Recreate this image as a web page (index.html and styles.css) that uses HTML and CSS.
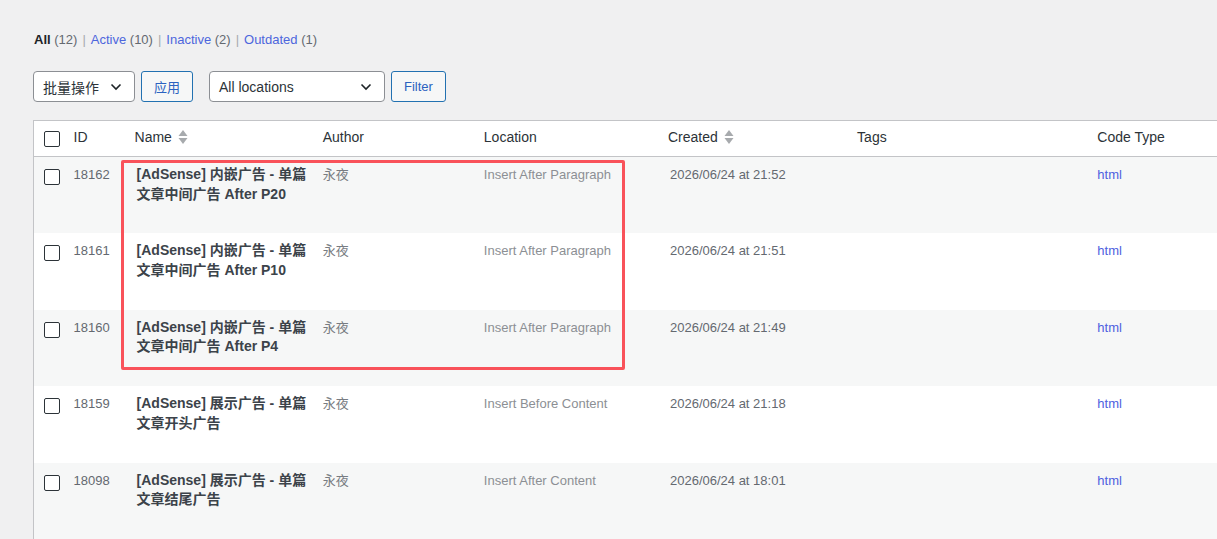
FILE: index.html
```html
<!DOCTYPE html>
<html lang="zh-CN">
<head>
  <meta charset="UTF-8" />
  <meta name="viewport" content="width=device-width, initial-scale=1.0"/>
  <title>Code Snippets</title>
  <link rel="stylesheet" href="styles.css">
</head>
<body>

  <ul class="subsubsub">
    <li><a class="current">All</a> <span class="count">(12)</span></li>
    <li class="sep">|</li>
    <li><a>Active</a> <span class="count">(10)</span></li>
    <li class="sep">|</li>
    <li><a>Inactive</a> <span class="count">(2)</span></li>
    <li class="sep">|</li>
    <li><a>Outdated</a> <span class="count">(1)</span></li>
  </ul>

  <div class="tablenav">
    <div class="select bulk">
      <span>批量操作</span>
      <svg class="chev" width="12" height="8" viewBox="0 0 12 8"><polyline points="1.5,1.5 6,6 10.5,1.5" fill="none" stroke="#1d2327" stroke-width="1.6"/></svg>
    </div>
    <button class="button">应用</button>
    <div class="select locations">
      <span>All locations</span>
      <svg class="chev" width="12" height="8" viewBox="0 0 12 8"><polyline points="1.5,1.5 6,6 10.5,1.5" fill="none" stroke="#1d2327" stroke-width="1.6"/></svg>
    </div>
    <button class="button">Filter</button>
  </div>

  <div class="table-wrap">
    <table class="snippets">
      <colgroup>
        <col style="width:30px"><col style="width:61px"><col style="width:188px"><col style="width:161px">
        <col style="width:184px"><col style="width:189px"><col style="width:240px"><col style="width:200px">
      </colgroup>
      <thead>
        <tr>
          <th class="check"><span class="box"></span></th>
          <th>ID</th>
          <th>Name <svg class="sort" width="10" height="16" viewBox="0 0 10 16"><polygon points="5,1 9.5,7 0.5,7" fill="#a7aaad"/><polygon points="0.5,9 9.5,9 5,15" fill="#a7aaad"/></svg></th>
          <th>Author</th>
          <th>Location</th>
          <th>Created <svg class="sort" width="10" height="16" viewBox="0 0 10 16"><polygon points="5,1 9.5,7 0.5,7" fill="#a7aaad"/><polygon points="0.5,9 9.5,9 5,15" fill="#a7aaad"/></svg></th>
          <th>Tags</th>
          <th>Code Type</th>
        </tr>
      </thead>
      <tbody>
        <tr>
          <td class="check"><span class="box"></span></td>
          <td class="id">18162</td>
          <td class="name">[AdSense] 内嵌广告 - 单篇文章中间广告 After P20</td>
          <td class="author">永夜</td>
          <td class="location">Insert After Paragraph</td>
          <td class="date">2026/06/24 at 21:52</td>
          <td></td>
          <td><a class="type">html</a></td>
        </tr>
        <tr>
          <td class="check"><span class="box"></span></td>
          <td class="id">18161</td>
          <td class="name">[AdSense] 内嵌广告 - 单篇文章中间广告 After P10</td>
          <td class="author">永夜</td>
          <td class="location">Insert After Paragraph</td>
          <td class="date">2026/06/24 at 21:51</td>
          <td></td>
          <td><a class="type">html</a></td>
        </tr>
        <tr>
          <td class="check"><span class="box"></span></td>
          <td class="id">18160</td>
          <td class="name">[AdSense] 内嵌广告 - 单篇文章中间广告 After P4</td>
          <td class="author">永夜</td>
          <td class="location">Insert After Paragraph</td>
          <td class="date">2026/06/24 at 21:49</td>
          <td></td>
          <td><a class="type">html</a></td>
        </tr>
        <tr>
          <td class="check"><span class="box"></span></td>
          <td class="id">18159</td>
          <td class="name">[AdSense] 展示广告 - 单篇文章开头广告</td>
          <td class="author">永夜</td>
          <td class="location">Insert Before Content</td>
          <td class="date">2026/06/24 at 21:18</td>
          <td></td>
          <td><a class="type">html</a></td>
        </tr>
        <tr>
          <td class="check"><span class="box"></span></td>
          <td class="id">18098</td>
          <td class="name">[AdSense] 展示广告 - 单篇文章结尾广告</td>
          <td class="author">永夜</td>
          <td class="location">Insert After Content</td>
          <td class="date">2026/06/24 at 18:01</td>
          <td></td>
          <td><a class="type">html</a></td>
        </tr>
      </tbody>
    </table>
    <div class="highlight"></div>
  </div>

</body>
</html>
```

FILE: styles.css
```css
body {
  margin: 0;
  padding: 30px 0 0 33px;
  background-color: #f0f0f1;
  font-family: "Liberation Sans", "Noto Sans CJK SC", sans-serif;
  font-size: 13px;
  color: #3c434a;
  overflow: hidden;
}
.subsubsub {
  list-style: none;
  margin: 0;
  padding: 0 0 0 1px;
  display: flex;
  gap: 5px;
  line-height: 20px;
  color: #646970;
}
.subsubsub a {
  color: #4d66dd;
}
.subsubsub a.current {
  color: #1d2327;
  font-weight: bold;
}
.subsubsub .sep {
  color: #a7aaad;
}
.tablenav {
  display: flex;
  align-items: center;
  margin-top: 21px;
  height: 31px;
}
.select {
  box-sizing: border-box;
  height: 31px;
  display: flex;
  align-items: center;
  justify-content: space-between;
  padding: 0 12px 0 9px;
  background: #fff;
  border: 1px solid #8c8f94;
  border-radius: 4px;
  font-size: 14px;
  color: #2c3338;
}
.bulk {
  width: 102px;
}
.locations {
  width: 176px;
  margin-left: 16px;
}
.button {
  box-sizing: border-box;
  height: 31px;
  margin-left: 6px;
  padding: 0 12px;
  background: #f6f7f7;
  border: 1px solid #2271b1;
  border-radius: 3px;
  color: #2b62c0;
  font-family: inherit;
  font-size: 13px;
}
.table-wrap {
  position: relative;
  margin-top: 18px;
}
.snippets {
  table-layout: fixed;
  width: 1255px;
  border-collapse: collapse;
  border: 1px solid #c3c4c7;
}
.snippets th {
  height: 32px;
  padding: 0 10px 3px;
  text-align: left;
  font-weight: normal;
  font-size: 14px;
  color: #2c3338;
  background: #fff;
  border-bottom: 1px solid #c3c4c7;
}
.snippets td {
  height: 76.5px;
  box-sizing: border-box;
  padding: 8px 10px;
  vertical-align: top;
  line-height: 19.5px;
}
.snippets tbody tr:nth-child(odd) {
  background: #f6f7f7;
}
.snippets tbody tr:nth-child(even) {
  background: #fff;
}
.snippets th.check {
  padding: 0 0 0 10px;
}
.snippets td.check {
  padding: 12px 0 0 10px;
}
.box {
  display: block;
  box-sizing: border-box;
  width: 16px;
  height: 16px;
  border: 1px solid #2c3338;
  border-radius: 2px;
  background: #fff;
}
.sort {
  vertical-align: -3px;
  margin-left: 2px;
}
.id {
  color: #646970;
}
.snippets td.name {
  font-weight: bold;
  font-size: 14px;
  color: #3c434a;
  padding: 8px 0 8px 12px;
}
.author {
  color: #787c82;
}
.location {
  color: #8c8f94;
}
.snippets td.date {
  color: #646970;
  padding-left: 12px;
}
.type {
  color: #4d5fe0;
}
.highlight {
  position: absolute;
  left: 88px;
  top: 40px;
  width: 504px;
  height: 210px;
  box-sizing: border-box;
  border: 3px solid #f9525a;
  border-radius: 2px;
}
```
